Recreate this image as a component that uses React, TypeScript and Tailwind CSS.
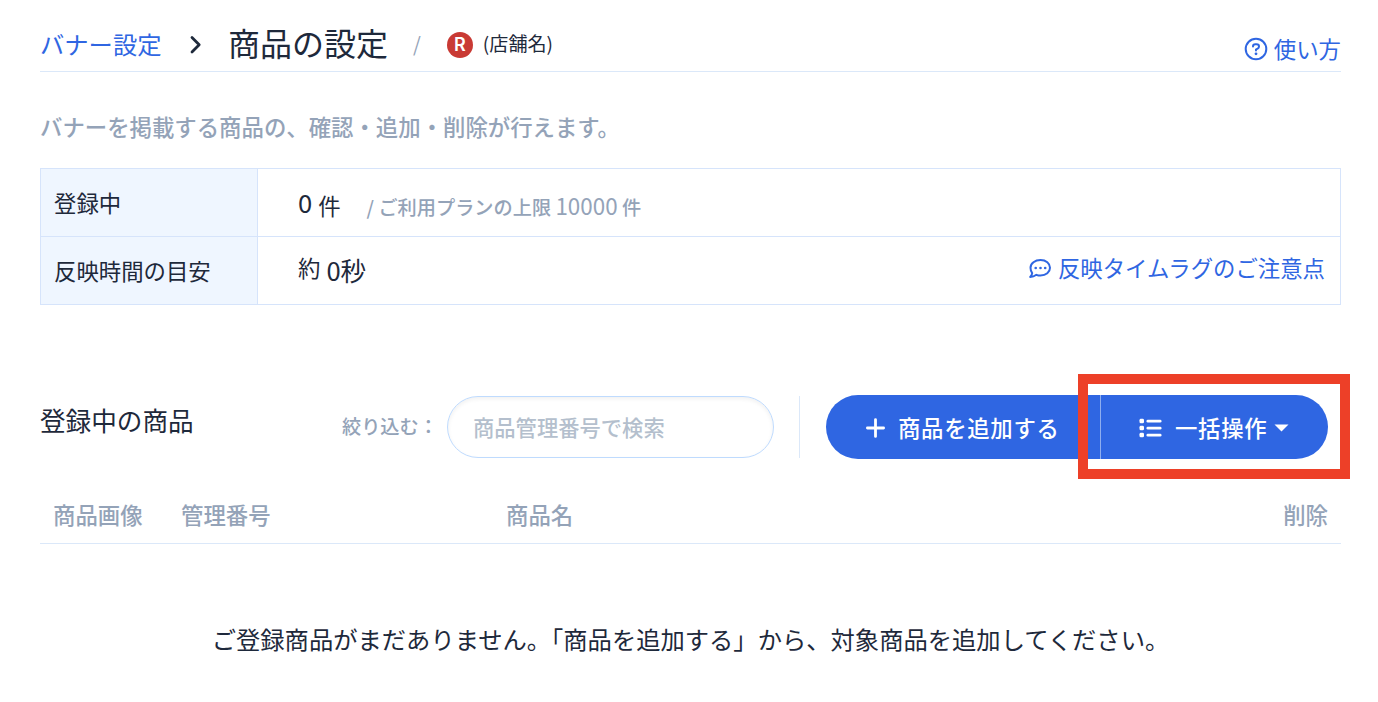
import type { ReactNode } from 'react'

interface StatusRowProps {
  label: string
  last?: boolean
  children: ReactNode
}

function StatusRow({ label, last, children }: StatusRowProps) {
  return (
    <div className={last ? 'flex h-[67px]' : 'flex h-[68px] border-b border-[#d6e4fb]'}>
      <div className="flex w-[217px] shrink-0 items-center border-r border-[#d6e4fb] bg-[#eff6ff] pb-0.5 pl-[13px] text-[22.4px]">
        {label}
      </div>
      <div className="flex flex-1 items-center pl-10">{children}</div>
    </div>
  )
}

function HelpIcon() {
  return (
    <svg width="24" height="24" viewBox="0 0 24 24" fill="none" stroke="currentColor" strokeWidth="2">
      <circle cx="12" cy="12" r="10.3" />
      <path d="M9 9.6c0-1.6 1-2.3 2.4-2.3h1.1c1.4 0 2.5.9 2.5 2.2 0 1-.6 1.6-1.4 2.1L12 12.5v1" strokeLinecap="round" />
      <circle cx="12" cy="16.8" r="1.4" fill="currentColor" stroke="none" />
    </svg>
  )
}

function CommentIcon() {
  return (
    <svg className="translate-y-0.5" width="24" height="22" viewBox="0 0 24 22" fill="none" stroke="currentColor" strokeWidth="2">
      <path d="M12.5 2C18 2 22 5.4 22 9.8s-4 7.8-9.5 7.8c-1.5 0-2.9-.3-4.1-.8-1.8 1.4-4 2.2-6.2 2.2 1-1.1 1.8-2.5 2-3.9C2.9 13.6 2.5 11.7 2.5 9.8 2.5 5.4 7 2 12.5 2z" strokeLinejoin="round" />
      <g fill="currentColor" stroke="none">
        <circle cx="7.7" cy="10" r="1.3" />
        <circle cx="12.5" cy="10" r="1.3" />
        <circle cx="17.2" cy="10" r="1.3" />
      </g>
    </svg>
  )
}

function ListIcon() {
  return (
    <svg width="24" height="20" viewBox="0 0 24 20" fill="currentColor">
      <rect x="0.5" y="0.8" width="4.5" height="4.5" rx="1.4" />
      <rect x="0.5" y="7.8" width="4.5" height="4.5" rx="1.4" />
      <rect x="0.5" y="14.8" width="4.5" height="4.5" rx="1.4" />
      <rect x="7.5" y="1.7" width="15" height="2.8" rx="1.3" />
      <rect x="7.5" y="8.7" width="15" height="2.8" rx="1.3" />
      <rect x="7.5" y="15.7" width="15" height="2.8" rx="1.3" />
    </svg>
  )
}

export default function App() {
  return (
    <div className="h-[702px] w-[1378px] overflow-hidden bg-white pl-10 pr-[37px] font-['Noto_Sans_CJK_JP',sans-serif] leading-none text-[#1e293b]">
      {/* Header */}
      <header className="flex h-[72px] items-center border-b border-[#dbe8f9] pt-[17px] whitespace-nowrap">
        <a className="w-[150px] text-[24.3px] text-[#2f66e2]">バナー設定</a>
        <svg className="w-3" height="20" viewBox="0 0 12 20" fill="none" stroke="currentColor" strokeWidth="2.8" strokeLinecap="round" strokeLinejoin="round">
          <path d="M2 3.5l7.2 7.2L2 17.9" />
        </svg>
        <h1 className="ml-[26px] pb-1 text-[32px]">商品の設定</h1>
        <span className="ml-[25px] text-[20px] text-[#94a3b8]">/</span>
        <span className="ml-[26px] flex size-[26px] translate-y-px items-center justify-center rounded-full bg-[#c93a34] font-['Inter',sans-serif] text-[18px] font-semibold text-white">R</span>
        <span className="ml-2.5 text-[19.1px]">(店舗名)</span>
        <a className="ml-auto flex items-center gap-1.5 pt-2.5 text-[22.4px] text-[#2f66e2]">
          <HelpIcon />
          <span className="-translate-y-px">使い方</span>
        </a>
      </header>

      <p className="mt-[43px] text-[22.4px] font-medium text-[#94a3b8]">バナーを掲載する商品の、確認・追加・削除が行えます。</p>

      {/* Registration status */}
      <section className="mt-[31px] border border-[#d6e4fb]">
        <StatusRow label="登録中">
          <span className="pb-0.5 text-[25.6px]">0</span>
          <span className="ml-1.5 pt-1 text-[22.4px]">件</span>
          <span className="ml-[26px] pt-1.5 text-[19.2px] font-medium text-[#94a3b8]">/ ご利用プランの上限 <span className="text-[22.4px] font-normal">10000</span> 件</span>
        </StatusRow>
        <StatusRow label="反映時間の目安" last>
          <span className="pb-2 text-[22.4px]">約</span>
          <span className="ml-1.5 pb-0.5 text-[25.6px]">0秒</span>
          <a className="mr-[15px] ml-auto flex items-center gap-1.5 pb-2 text-[22.4px] text-[#2f66e2]">
            <CommentIcon />
            反映タイムラグのご注意点
          </a>
        </StatusRow>
      </section>

      {/* Toolbar */}
      <div className="mt-[69px] flex h-[105px] items-center whitespace-nowrap">
        <h2 className="w-[302px] pb-3.5 text-[25.6px]">登録中の商品</h2>
        <label className="w-[105px] text-[19.2px] font-medium text-[#94a3b8]">絞り込む：</label>
        <input
          className="h-[62px] w-[327px] rounded-full border border-[#bfdbfe] px-[25px] text-[21.3px] font-medium shadow-[inset_0_2px_4px_rgba(0,0,0,0.06)] placeholder:text-[#b4bfcd]"
          placeholder="商品管理番号で検索"
        />
        <div className="ml-[25px] h-[62px] border-l border-[#dbe8f9]" />
        <div className="relative ml-[26px] flex h-16 shrink-0 text-[22.4px] font-medium tracking-[0.7px] text-white">
          <button className="flex w-[274px] items-center gap-[13px] rounded-l-full bg-[#2f66e2] pt-0.5 pl-10">
            <svg width="19" height="20" viewBox="0 0 19 20" stroke="currentColor" strokeWidth="2.8" strokeLinecap="round"><path d="M9.5 1.600v16.800M1.400 10h16.200" /></svg>
            <span className="-translate-y-px">商品を追加する</span>
          </button>
          <button className="flex w-[228px] items-center rounded-r-full border-l border-[#8faeef] bg-[#2f66e2] pt-0.5 pl-[38px]">
            <ListIcon />
            <span className="ml-3 -translate-y-px">一括操作</span>
            <svg className="ml-[7px]" width="15" height="8" viewBox="0 0 15 8" fill="currentColor"><path d="M0.5 0.5h14L7.5 7.5z" /></svg>
          </button>
          {/* Highlight around the bulk action button */}
          <div className="pointer-events-none absolute -top-[21px] left-[252px] h-[105px] w-[272px] border-[10px] border-[#ed4028]" />
        </div>
      </div>

      {/* Product table */}
      <div className="flex h-[65px] items-center border-b border-[#dbe8f9] px-[13px] pt-1.5 text-[22.4px] font-medium text-[#94a3b8]">
        <span className="w-32">商品画像</span>
        <span className="w-[325px]">管理番号</span>
        <span>商品名</span>
        <span className="ml-auto">削除</span>
      </div>
      <p className="mt-[83px] text-center text-[24.3px] whitespace-nowrap">
        ご登録商品がまだありません。「商品を追加する」から、対象商品を追加してください。
      </p>
    </div>
  )
}
